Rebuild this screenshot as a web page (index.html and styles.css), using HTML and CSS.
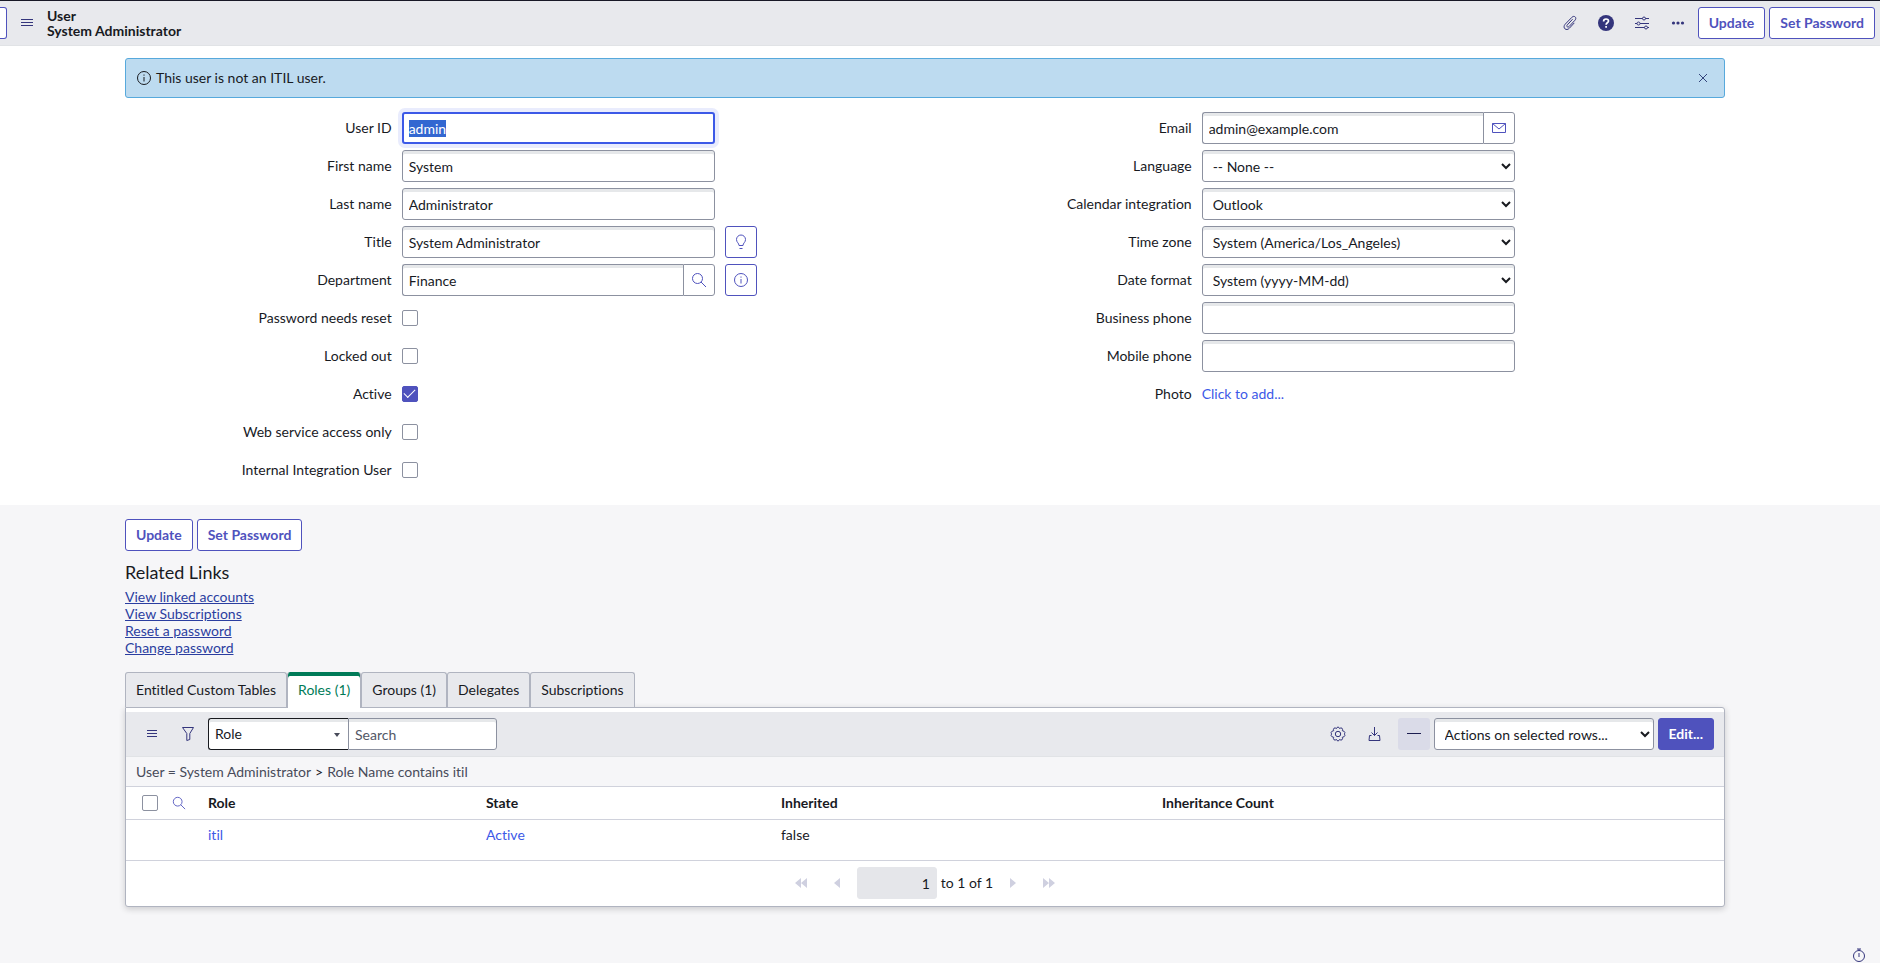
FILE: index.html
```html
<!DOCTYPE html>
<html lang="en">

<head>
    <meta charset="UTF-8" />
    <meta name="viewport" content="width=device-width, initial-scale=1.0" />
    <title>System Administrator | User</title>
    <link rel="stylesheet" href="styles.css">
</head>

<body>

    <!-- Header bar -->
    <header class="navbar">
        <button class="btn back" aria-label="Back"></button>
        <button class="icon-btn" aria-label="Additional actions">
            <svg width="12" height="12" viewBox="0 0 12 12"><path d="M0 2.5h12M0 5.5h12M0 8.5h12" /></svg>
        </button>
        <h1 class="title">User<br>System Administrator</h1>
        <div class="navbar-right">
            <button class="icon-btn" aria-label="Attachments">
                <svg width="16" height="16" viewBox="0 0 16 16"><path d="M10.6 4.2 5.3 9.9c-1.3 1.4.4 3 1.7 1.7l6-6.4c2.3-2.5-.8-5.3-3.1-2.9L3.2 9.2c-3.2 3.5 1 7.4 4.2 4l4.9-5.3" /></svg>
            </button>
            <button class="icon-btn" aria-label="Help">
                <svg width="16" height="16" viewBox="0 0 16 16"><circle cx="8" cy="8" r="8" class="solid" /><path d="M5.6 6.4C5.6 3.2 10.5 3.3 10.5 6c0 1.8-2.4 1.8-2.4 3.7M8.1 11v1.7" stroke="#fff" stroke-width="1.7" /></svg>
            </button>
            <button class="icon-btn" aria-label="Personalize form">
                <svg width="16" height="16" viewBox="0 0 16 16"><path d="M1 3.5h7.5M11.500 3.5H15M1 8.5h2M6 8.5h9M1 12.5h9.500M13.500 12.500H15" /><circle cx="10" cy="3.500" r="1.500" /><circle cx="4.500" cy="8.500" r="1.500" /><circle cx="12" cy="12.500" r="1.500" /></svg>
            </button>
            <button class="icon-btn" aria-label="More options">
                <svg width="16" height="16" viewBox="0 0 16 16"><g class="solid"><circle cx="3.500" cy="8" r="1.600" /><circle cx="8" cy="8" r="1.600" /><circle cx="12.500" cy="8" r="1.600" /></g></svg>
            </button>
            <button class="btn">Update</button>
            <button class="btn">Set Password</button>
        </div>
    </header>

    <!-- User form -->
    <section class="form-area">
        <div class="alert">
            <svg class="info" width="16" height="16" viewBox="0 0 16 16"><circle cx="8" cy="8" r="6.5" /><path d="M8 7v4.500M8 4.500v1.200" /></svg>
            <span>This user is not an ITIL user.</span>
            <button class="close" aria-label="Close">
                <svg width="10" height="10" viewBox="0 0 10 10"><path d="M1 1l8 8M9 1l-8 8" /></svg>
            </button>
        </div>

        <form class="columns">
            <div class="column">
                <div class="row">
                    <label for="user_name">User ID</label>
                    <div class="field"><input type="text" id="user_name" value="admin" autofocus /></div>
                </div>
                <div class="row">
                    <label for="first_name">First name</label>
                    <div class="field"><input type="text" id="first_name" value="System" /></div>
                </div>
                <div class="row">
                    <label for="last_name">Last name</label>
                    <div class="field"><input type="text" id="last_name" value="Administrator" /></div>
                </div>
                <div class="row">
                    <label for="job_title">Title</label>
                    <div class="field"><input type="text" id="job_title" value="System Administrator" /></div>
                    <button type="button" class="btn square" aria-label="Suggestion">
                        <svg width="16" height="16" viewBox="0 0 16 16"><path d="M6 11.500C6 9 3.500 8.500 3.500 5.500a4.500 4.500 0 0 1 9 0C12.500 8.500 10 9 10 11.500zM6.500 14.500h3" /></svg>
                    </button>
                </div>
                <div class="row">
                    <label for="department">Department</label>
                    <div class="field group">
                        <input type="text" id="department" value="Finance" />
                        <button type="button" class="addon" aria-label="Lookup department">
                            <svg width="16" height="16" viewBox="0 0 16 16"><circle cx="6.500" cy="6.500" r="5" /><path d="M10 10l5 5" /></svg>
                        </button>
                    </div>
                    <button type="button" class="btn square" aria-label="Preview department">
                        <svg width="16" height="16" viewBox="0 0 16 16"><circle cx="8" cy="8" r="6.500" /><path d="M8 7v4.500M8 4.500v1.200" /></svg>
                    </button>
                </div>
                <div class="row">
                    <label for="needs_reset">Password needs reset</label>
                    <div class="field"><input type="checkbox" id="needs_reset" /></div>
                </div>
                <div class="row">
                    <label for="locked_out">Locked out</label>
                    <div class="field"><input type="checkbox" id="locked_out" /></div>
                </div>
                <div class="row">
                    <label for="active">Active</label>
                    <div class="field"><input type="checkbox" id="active" checked /></div>
                </div>
                <div class="row">
                    <label for="web_service">Web service access only</label>
                    <div class="field"><input type="checkbox" id="web_service" /></div>
                </div>
                <div class="row">
                    <label for="integration_user">Internal Integration User</label>
                    <div class="field"><input type="checkbox" id="integration_user" /></div>
                </div>
            </div>

            <div class="column">
                <div class="row">
                    <label for="email">Email</label>
                    <div class="field group">
                        <input type="text" id="email" value="admin@example.com" />
                        <button type="button" class="addon" aria-label="Send email">
                            <svg width="16" height="16" viewBox="0 0 16 16"><path d="M1.500 3.500h13v9h-13zM1.500 3.500 8 9l6.500-5.500" /></svg>
                        </button>
                    </div>
                </div>
                <div class="row">
                    <label for="language">Language</label>
                    <div class="field"><select id="language"><option>-- None --</option></select></div>
                </div>
                <div class="row">
                    <label for="calendar">Calendar integration</label>
                    <div class="field"><select id="calendar"><option>Outlook</option></select></div>
                </div>
                <div class="row">
                    <label for="time_zone">Time zone</label>
                    <div class="field"><select id="time_zone"><option>System (America/Los_Angeles)</option></select></div>
                </div>
                <div class="row">
                    <label for="date_format">Date format</label>
                    <div class="field"><select id="date_format"><option>System (yyyy-MM-dd)</option></select></div>
                </div>
                <div class="row">
                    <label for="phone">Business phone</label>
                    <div class="field"><input type="text" id="phone" /></div>
                </div>
                <div class="row">
                    <label for="mobile_phone">Mobile phone</label>
                    <div class="field"><input type="text" id="mobile_phone" /></div>
                </div>
                <div class="row">
                    <label for="photo">Photo</label>
                    <div class="field"><a href="#" id="photo">Click to add...</a></div>
                </div>
            </div>
        </form>
    </section>

    <!-- Related links and lists -->
    <section class="related">
        <div class="buttons">
            <button class="btn">Update</button>
            <button class="btn">Set Password</button>
        </div>

        <h2>Related Links</h2>
        <ul class="links">
            <li><a href="#">View linked accounts</a></li>
            <li><a href="#">View Subscriptions</a></li>
            <li><a href="#">Reset a password</a></li>
            <li><a href="#">Change password</a></li>
        </ul>

        <div class="tabs" role="tablist">
            <button class="tab" role="tab">Entitled Custom Tables</button>
            <button class="tab selected" role="tab" aria-selected="true">Roles (1)</button>
            <button class="tab" role="tab">Groups (1)</button>
            <button class="tab" role="tab">Delegates</button>
            <button class="tab" role="tab">Subscriptions</button>
        </div>

        <div class="panel">
            <div class="toolbar">
                <button class="icon-btn" aria-label="List controls">
                    <svg width="12" height="12" viewBox="0 0 12 12"><path d="M1 2.500h10M1 5.500h10M1 8.500h10" /></svg>
                </button>
                <button class="icon-btn" aria-label="Filter">
                    <svg width="16" height="16" viewBox="0 0 16 16"><path d="M2.500 1.500h11L9.800 7.500v6l-3 1v-7z" /></svg>
                </button>
                <div class="search">
                    <div class="search-by">
                        <select aria-label="Search field"><option>Role</option></select>
                    </div>
                    <input type="text" placeholder="Search" aria-label="Search" />
                </div>
                <div class="toolbar-right">
                    <button class="icon-btn" aria-label="Settings">
                        <svg width="16" height="16" viewBox="0 0 16 16"><path d="M8 1.100q1.200 0 1.500 1.400 1.500-1 2.500-.300 1 1 .300 2.500Q14.600 5 14.900 6.500q.2 1-.9 1.500 1.100.5.9 1.500-.3 1.500-2.600 1.800.7 1.500-.3 2.500-1 .7-2.500-.3Q9.200 14.900 8 14.900T6.500 13.500q-1.500 1-2.500.3-1-1-.3-2.500Q1.400 11 1.100 9.500q-.2-1 .9-1.500-1.100-.5-.9-1.500Q1.400 5 3.700 4.700 3 3.200 4 2.200q1-.7 2.500.3Q6.800 1.100 8 1.100z" /><circle cx="8" cy="8" r="2.700" /></svg>
                    </button>
                    <button class="icon-btn" aria-label="Export">
                        <svg width="16" height="16" viewBox="0 0 16 16"><path d="M8.500 1v8.500M5.500 6.500l3 3 3-3M5.500 9.500h-2l-.5 5h11l-.5-5h-2" /></svg>
                    </button>
                    <button class="icon-btn collapse" aria-label="Collapse">
                        <svg width="14" height="14" viewBox="0 0 14 14"><path d="M0 6.500h14" /></svg>
                    </button>
                    <select class="actions" aria-label="Actions"><option>Actions on selected rows...</option></select>
                    <button class="btn primary">Edit...</button>
                </div>
            </div>

            <div class="breadcrumb"><a href="#">User = System Administrator</a><span>&gt;</span><a href="#">Role Name contains itil</a></div>

            <table>
                <thead>
                    <tr>
                        <th class="col-check"><input type="checkbox" aria-label="Select all" /></th>
                        <th class="col-search">
                            <button class="search-btn" aria-label="Show search row">
                                <svg width="14" height="14" viewBox="0 0 16 16"><circle cx="6.500" cy="6.500" r="5" /><path d="M10 10l5 5" /></svg>
                            </button>
                        </th>
                        <th class="col-role">Role</th>
                        <th class="col-state">State</th>
                        <th class="col-inherited">Inherited</th>
                        <th>Inheritance Count</th>
                    </tr>
                </thead>
                <tbody>
                    <tr>
                        <td></td>
                        <td></td>
                        <td><a href="#">itil</a></td>
                        <td><a href="#">Active</a></td>
                        <td>false</td>
                        <td></td>
                    </tr>
                </tbody>
            </table>

            <div class="pager">
                <button class="page-btn" aria-label="First page" disabled><svg width="12" height="10" viewBox="0 0 12 10"><path d="M6 0v10L0 5zM12 0v10L6 5z" /></svg></button>
                <button class="page-btn" aria-label="Previous page" disabled><svg width="12" height="10" viewBox="0 0 12 10"><path d="M9 0v10L3 5z" /></svg></button>
                <input type="text" value="1" aria-label="Row number" readonly />
                <span>to 1 of 1</span>
                <button class="page-btn" aria-label="Next page" disabled><svg width="12" height="10" viewBox="0 0 12 10"><path d="M3 0v10l6-5z" /></svg></button>
                <button class="page-btn" aria-label="Last page" disabled><svg width="12" height="10" viewBox="0 0 12 10"><path d="M0 0v10l6-5zM6 0v10l6-5z" /></svg></button>
            </div>
        </div>
    </section>

    <button class="timer" aria-label="Response time">
        <svg width="14" height="14" viewBox="0 0 14 14"><circle cx="7" cy="8" r="5.500" /><path d="M5 1h4M7 1v2M7 5v4" /></svg>
    </button>

    <script>
        // Start with the user ID selected
        const userId = document.getElementById('user_name');
        userId.focus();
        userId.select();
    </script>

</body>

</html>
```
FILE: styles.css
```css
* {
    box-sizing: border-box;
}

body {
    margin: 0;
    min-height: 100vh;
    font-family: Lato, "Liberation Sans", sans-serif;
    font-size: 14px;
    line-height: 18px;
    font-variant-ligatures: none;
    color: #181a1f;
    background: #f6f6f8;
}

button,
input,
select {
    font: inherit;
    font-variant-ligatures: none;
    color: inherit;
    margin: 0;
}

button {
    cursor: pointer;
}

a {
    color: #3c59e7;
    text-decoration: none;
}

svg {
    display: block;
    fill: none;
    stroke: currentColor;
    stroke-width: 1;
}

.solid {
    fill: currentColor;
    stroke: none;
}

/* Buttons */
.btn {
    height: 32px;
    padding: 0 10px;
    font-weight: 700;
    color: #4f52bd;
    background: #fff;
    border: 1px solid #4f52bd;
    border-radius: 3px;
}

.btn.primary {
    color: #fff;
    background: #4f52bd;
}

.btn.square {
    width: 32px;
    padding: 0 7px;
}

.icon-btn {
    display: flex;
    align-items: center;
    justify-content: center;
    width: 32px;
    height: 32px;
    padding: 0;
    color: #34357c;
    background: none;
    border: none;
    border-radius: 3px;
}

/* Header */
.navbar {
    display: flex;
    align-items: center;
    height: 46px;
    padding-right: 5px;
    background: #e8e9ed;
    border-top: 1px solid #181826;
    border-bottom: 1px solid #e1e3e6;
}

.navbar .back {
    width: 7px;
    padding: 0;
    border-left: none;
    border-radius: 0 3px 3px 0;
}

.navbar .back + .icon-btn {
    margin-left: 4px;
}

.title {
    margin: 0 0 0 4px;
    font-size: 14px;
    font-weight: 700;
    line-height: 15px;
}

.navbar-right {
    display: flex;
    gap: 4px;
    margin-left: auto;
}

/* Form */
.form-area {
    padding: 12px 155px 13px 125px;
    background: #fff;
}

.alert {
    display: flex;
    align-items: center;
    gap: 4px;
    height: 40px;
    padding: 0 10px;
    background: #bddbf0;
    border: 1px solid #57a9dc;
    border-radius: 3px;
}

.alert .close {
    margin-left: auto;
    padding: 6px;
    color: #34457c;
    background: none;
    border: none;
}

.columns {
    display: grid;
    grid-template-columns: 1fr 1fr;
    margin-top: 14px;
}

.row {
    display: grid;
    grid-template-columns: 4fr 5fr 3fr;
    align-items: center;
    height: 32px;
    margin-bottom: 6px;
}

.row label {
    text-align: right;
}

.field {
    display: flex;
    padding: 0 10px;
}

input[type="text"],
select {
    width: 100%;
    height: 32px;
    padding: 0 6px;
    background: #fff;
    border: 1px solid #8c91a0;
    border-radius: 3px;
    box-shadow: inset 0 3px 0 #e6e8ea;
    outline: none;
}

input[type="text"]:focus {
    padding: 0 5px;
    border: 2px solid #3c59e7;
    box-shadow: 0 0 0 4px #e9ecfd;
}

::selection {
    color: #fff;
    background: #3367d1;
}

.group input[type="text"] {
    flex: 1;
    min-width: 0;
    border-right: none;
    border-radius: 3px 0 0 3px;
}

.addon {
    width: 32px;
    height: 32px;
    padding: 0 7px;
    color: #4f52bd;
    background: #fff;
    border: 1px solid #8c91a0;
    border-radius: 0 3px 3px 0;
}

input[type="checkbox"] {
    appearance: none;
    display: flex;
    align-items: center;
    justify-content: center;
    width: 16px;
    height: 16px;
    background: #fff;
    border: 1px solid #8c91a0;
    border-radius: 2px;
}

input[type="checkbox"]:checked {
    background: #4f52bd;
    border-color: #4f52bd;
}

input[type="checkbox"]:checked::before {
    content: "";
    width: 10px;
    height: 5px;
    margin-bottom: 4px;
    border-left: 1px solid #fff;
    border-bottom: 1px solid #fff;
    transform: rotate(-45deg);
}

/* Related links */
.related {
    padding: 14px 155px 40px 125px;
}

.buttons {
    display: flex;
    gap: 4px;
}

.related h2 {
    margin: 11px 0 6px;
    font-size: 18px;
    font-weight: 400;
    line-height: 20px;
}

.links {
    margin: 0;
    padding: 0;
    list-style: none;
}

.links a {
    color: #2b3ea0;
    text-decoration: underline;
}

.links li {
    height: 17px;
}

/* Tabs */
.tabs {
    display: flex;
    margin-top: 16px;
}

.tab {
    height: 35px;
    padding: 0 10px;
    background: #e8e9ed;
    border: 1px solid #b0b4c0;
    border-bottom: none;
    border-radius: 3px 3px 0 0;
}

.tab.selected {
    height: 36px;
    margin-bottom: -1px;
    color: #007b58;
    background: #fff;
    border-top: none;
    box-shadow: inset 0 4px 0 #007b58;
    z-index: 1;
}

/* Role list */
.panel {
    padding-top: 4px;
    background: #fff;
    border: 1px solid #b0b4c0;
    border-radius: 0 3px 3px 3px;
    box-shadow: 0 2px 6px rgba(24, 26, 31, 0.2);
}

.toolbar {
    display: flex;
    align-items: center;
    gap: 4px;
    height: 45px;
    padding: 0 10px;
    background: #e8e9ed;
    border-bottom: 1px solid #e1e3e6;
}

.search {
    display: flex;
    width: 289px;
}

.search-by {
    position: relative;
    flex: 0 0 140px;
}

.search-by select {
    appearance: none;
    border-color: #181a1f;
    border-right: none;
    border-radius: 3px 0 0 3px;
}

.search-by::after {
    content: "";
    position: absolute;
    top: 15px;
    right: 8px;
    border: 3px solid transparent;
    border-top: 4px solid #484b5a;
    border-bottom: none;
}

.search input[type="text"] {
    min-width: 0;
    border-radius: 0 3px 3px 0;
}

.search input::placeholder {
    color: #535766;
}

.toolbar-right {
    display: flex;
    gap: 4px;
    margin-left: auto;
}

.toolbar-right .collapse {
    margin-left: 4px;
    color: #1c1d50;
    background: #dadbe8;
}

.toolbar-right .actions {
    width: 220px;
}

.breadcrumb {
    height: 30px;
    padding: 6px 10px;
    background: #f6f6f8;
    border-bottom: 1px solid #d0d2dc;
}

.breadcrumb a {
    color: #484b5a;
}

.breadcrumb span {
    padding: 0 4px;
}

table {
    width: 100%;
    table-layout: fixed;
    border-collapse: collapse;
}

th,
td {
    padding: 0;
    text-align: left;
    border-bottom: 1px solid #d0d2dc;
}

th {
    height: 32px;
    font-weight: 700;
}

td {
    height: 41px;
    padding-bottom: 10px;
}

.col-check {
    width: 46px;
    padding-left: 16px;
}

.col-search {
    width: 36px;
}

.col-role {
    width: 278px;
}

.col-state {
    width: 295px;
}

.col-inherited {
    width: 381px;
}

.search-btn {
    display: block;
    padding: 0;
    color: #4f52bd;
    background: none;
    border: none;
}

.pager {
    display: flex;
    align-items: center;
    justify-content: center;
    gap: 4px;
    height: 45px;
}

.pager input[type="text"] {
    width: 80px;
    text-align: right;
    background: #e5e6ea;
    border-color: #e5e6ea;
    box-shadow: none;
}

.page-btn {
    width: 32px;
    height: 32px;
    padding: 0 10px;
    background: none;
    border: none;
}

.page-btn path {
    fill: #cfd0e0;
    stroke: none;
}

.timer {
    position: fixed;
    right: 14px;
    bottom: 1px;
    padding: 0;
    color: #34357c;
    background: none;
    border: none;
}
```
